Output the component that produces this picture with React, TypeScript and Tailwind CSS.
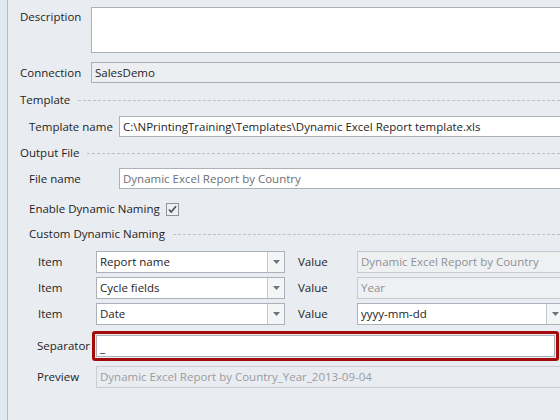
import React from 'react';

const box = 'h-[21px] border border-[#acb1b9] flex items-center px-[3px] whitespace-nowrap overflow-hidden';

function Section({ title, className = '' }: { title: string; className?: string }) {
  return (
    <div className={`flex items-center h-[16px] ${className}`}>
      <span>{title}</span>
      <div className="flex-1 ml-[8px] border-t border-dashed border-[#bcc1c9]" />
    </div>
  );
}

function Arrow() {
  return (
    <div className="w-[17px] h-full border-l border-[#c5c9cf] bg-[#f4f5f7] flex items-center justify-center">
      <svg width="7" height="4" viewBox="0 0 7 4">
        <path d="M0 0h7L3.5 4z" fill="#6f737a" />
      </svg>
    </div>
  );
}

function Combo({ value, className = '' }: { value: string; className?: string }) {
  return (
    <div className={`h-[22px] border border-[#acb1b9] bg-white flex items-stretch ${className}`}>
      <span className="flex-1 px-[3px] flex items-center whitespace-nowrap overflow-hidden">{value}</span>
      <Arrow />
    </div>
  );
}

export default function App() {
  return (
    <div className="w-[560px] h-[420px] overflow-hidden flex bg-[#e9ecf0] text-[11.5px] text-[#1e1e1e] font-['Segoe_UI','Open_Sans',sans-serif] leading-none">
      {/* left frame strip */}
      <div className="w-[8px] shrink-0 bg-[#e2e8f0] border-r border-[#aebbd0]" />

      <div className="flex-1 flex flex-col min-w-0">
        {/* Description */}
        <div className="flex mt-[7px] pl-[12px]">
          <span className="w-[71px] pt-[4px] shrink-0">Description</span>
          <div className="h-[46px] flex-1 -mr-[4px] border border-[#acb1b9] bg-white" />
        </div>

        {/* Connection */}
        <div className="flex items-center mt-[9px] pl-[12px]">
          <span className="w-[71px] shrink-0">Connection</span>
          <div className={`${box} flex-1 -mr-[4px] bg-[#eceef1]`}>SalesDemo</div>
        </div>

        <Section title="Template" className="mt-[9px] pl-[12px]" />

        <div className="flex items-center mt-[8px] pl-[21px]">
          <span className="w-[90px] shrink-0">Template name</span>
          <div className={`${box} flex-1 -mr-[4px] bg-white`}>
            C:\NPrintingTraining\Templates\Dynamic Excel Report template.xls
          </div>
        </div>

        <Section title="Output File" className="mt-[8px] pl-[12px]" />

        <div className="flex items-center mt-[7px] pl-[21px]">
          <span className="w-[90px] shrink-0">File name</span>
          <div className={`${box} flex-1 -mr-[4px] bg-white text-[#6d6f73]`}>
            Dynamic Excel Report by Country
          </div>
        </div>

        <div className="flex items-center mt-[12px] pl-[21px] h-[16px]">
          <span>Enable Dynamic Naming</span>
          <div className="ml-[6px] w-[13px] h-[13px] border border-[#8f949b] bg-[#eef0f3] flex items-center justify-center">
            <svg width="9" height="9" viewBox="0 0 9 9">
              <path d="M1 4.5l2.2 2.6L8 1.2" stroke="#4a4d52" strokeWidth="1.6" fill="none" />
            </svg>
          </div>
        </div>

        <Section title="Custom Dynamic Naming" className="mt-[9px] pl-[21px]" />

        <div className="flex flex-col gap-[4px] mt-[9px] pl-[30px]">
          {[
            { item: 'Report name', value: 'Dynamic Excel Report by Country', editable: false },
            { item: 'Cycle fields', value: 'Year', editable: false },
            { item: 'Date', value: 'yyyy-mm-dd', editable: true },
          ].map((r) => (
            <div key={r.item} className="flex items-center h-[22px]">
              <span className="w-[58px] shrink-0">Item</span>
              <Combo value={r.item} className="w-[189px] shrink-0" />
              <span className="w-[72px] pl-[13px] shrink-0">Value</span>
              {r.editable ? (
                <Combo value={r.value} className="flex-1 -mr-[4px]" />
              ) : (
                <div className="h-[22px] flex-1 -mr-[4px] border border-[#c6cad0] bg-[#eef0f2] text-[#8e9196] flex items-center px-[3px] whitespace-nowrap overflow-hidden">
                  {r.value}
                </div>
              )}
            </div>
          ))}
        </div>

        {/* Separator */}
        <div className="flex items-center mt-[6px] pl-[29px]">
          <span className="w-[55px] shrink-0">Separator</span>
          <div className="flex-1 mr-[1px] h-[30px] border-[3px] border-[#a30a0a] rounded-[3px] p-[1px]">
            <div className="h-full border border-[#acb1b9] bg-white flex items-end px-[3px] pb-[3px]">_</div>
          </div>
        </div>

        {/* Preview */}
        <div className="flex items-center mt-[5px] pl-[29px]">
          <span className="w-[59px] shrink-0">Preview</span>
          <div className="h-[22px] flex-1 -mr-[4px] border border-[#c9ccd1] text-[#9a9ca0] flex items-center px-[3px] whitespace-nowrap overflow-hidden">
            Dynamic Excel Report by Country_Year_2013-09-04
          </div>
        </div>
      </div>
    </div>
  );
}
